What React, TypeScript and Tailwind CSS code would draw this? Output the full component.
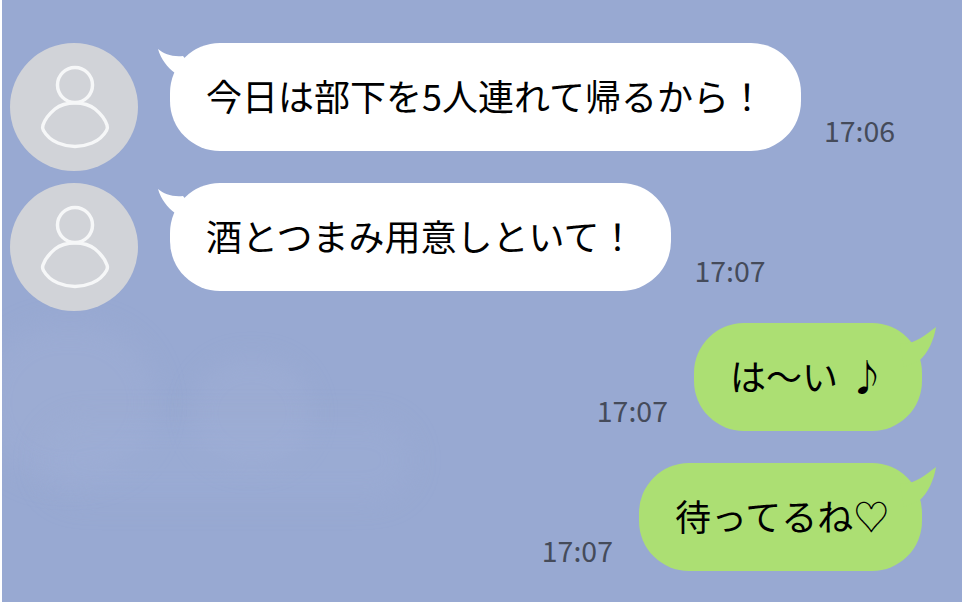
const font = "font-['Noto_Sans_CJK_JP','Noto_Sans',sans-serif]";

const Avatar = () => (
  <div className="w-[128px] h-[128px] mb-[-20px] shrink-0 rounded-full bg-[#d1d3d8] flex items-center justify-center">
    <svg width="128" height="128" viewBox="0 0 128 128" fill="none" stroke="#f6f7f8" strokeWidth="3.500">
      <circle cx="65" cy="42" r="17.500" />
      <path d="M65 60c-9 0-15 2-20 6-6 5-10 10-12 16-.7 2-.7 3.500.5 5.500 3 5.500 8.500 10 14.500 12.500 6 2.500 11 3.500 17 3.500s11-1 17-3.500c6-2.500 11.500-7 14.500-12.500 1.200-2 1.200-3.500.5-5.500-2-6-6-11-12-16-5-4-11-6-20-6z" />
    </svg>
  </div>
);

const IncomingRow = ({ text, time }: { text: string; time: string }) => (
  <div className="flex items-start h-[108px]">
    <Avatar />
    <div className="relative ml-[32px] h-[108px] px-[36px] pb-[5px] rounded-[50px] bg-white flex items-center">
      <svg className="absolute left-[-13px] top-[5px]" width="40" height="26" viewBox="0 0 40 26">
        <path d="M1 1c6 5 14 8 25 7l8 10-16 7C10 19 4 11 1 1z" fill="#fff" />
      </svg>
      <span className="relative text-[36px] leading-[54px] text-black whitespace-nowrap">{text}</span>
    </div>
    <span className="ml-[23px] mt-[68px] text-[28.500px] leading-[38px] text-[#454b5a]">{time}</span>
  </div>
);

const OutgoingRow = ({ text, time, width }: { text: string; time: string; width: string }) => (
  <div className="flex items-start justify-end h-[108px] pr-[40px]">
    <span className="mr-[26px] mt-[68px] text-[28.500px] leading-[38px] text-[#454b5a]">{time}</span>
    <div className={`relative h-[108px] ${width} pl-[36px] pb-[5px] rounded-[50px] bg-[#acdf73] flex items-center`}>
      <svg className="absolute right-[-14px] top-[4px]" width="40" height="44" viewBox="0 0 40 44">
        <path d="M40 0c-2 13-8 26-17 34L8 40 4 16C18 18 28 9 40 0z" fill="#acdf73" />
      </svg>
      <span className="relative text-[36px] leading-[54px] text-black whitespace-nowrap [word-spacing:3px]">{text}</span>
    </div>
  </div>
);

export default function App() {
  return (
    <div className={`${font} w-[962px] h-[604px] bg-white pl-[2px] pb-[2px] overflow-hidden`}>
      <div className="relative w-full h-full bg-[#98a9d2] overflow-hidden">
        {/* faint clouds in the wallpaper */}
        <div className="absolute left-[-20px] top-[325px] w-[175px] h-[155px] rounded-full bg-[#a2b3d8]/35 blur-[14px]" />
        <div className="absolute left-[190px] top-[358px] w-[120px] h-[110px] rounded-full bg-[#a2b3d8]/35 blur-[12px]" />
        <div className="absolute left-[40px] top-[420px] w-[370px] h-[80px] rounded-full bg-[#a0b0d6]/30 blur-[14px]" />
        <div className="relative flex flex-col gap-[32px] pt-[43px] pl-[8px]">
          <IncomingRow text="今日は部下を5人連れて帰るから！" time="17:06" />
          <IncomingRow text="酒とつまみ用意しといて！" time="17:07" />
          <OutgoingRow text="は〜い ♪" time="17:07" width="w-[228px]" />
          <OutgoingRow text="待ってるね♡" time="17:07" width="w-[283px]" />
        </div>
      </div>
    </div>
  );
}
